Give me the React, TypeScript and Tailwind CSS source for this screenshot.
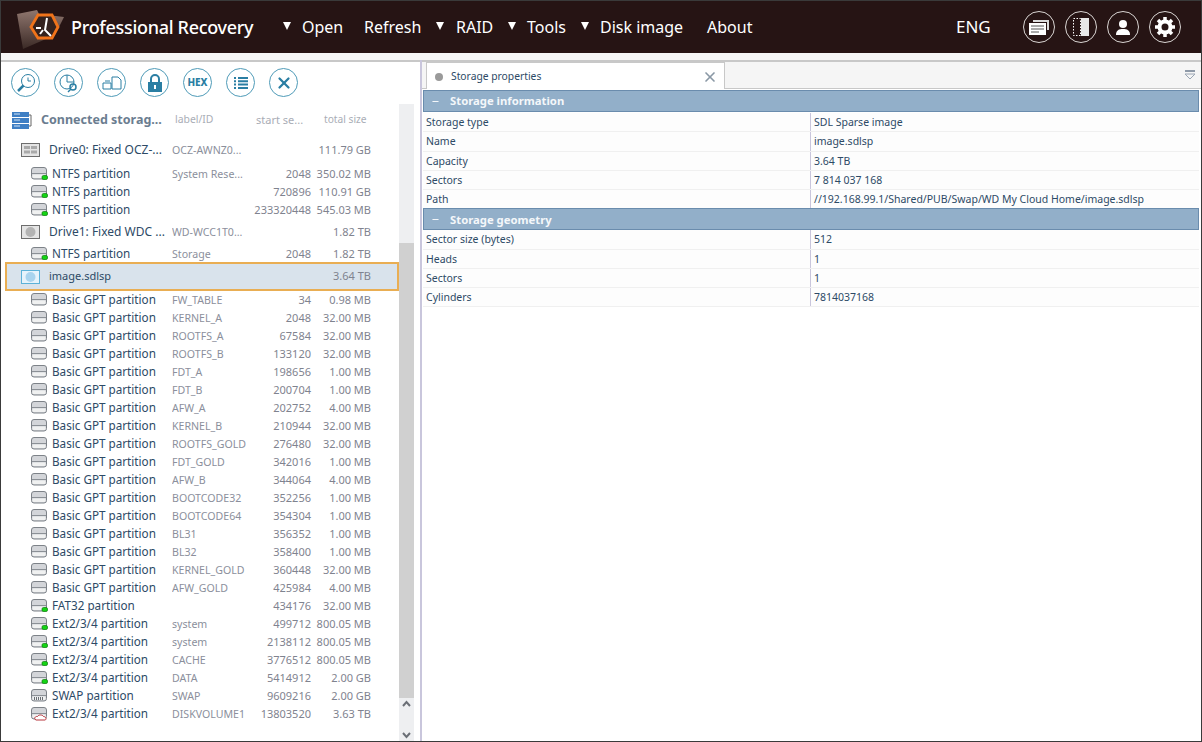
import { Minus, X } from 'lucide-react';

const uiFont = "font-['Noto_Sans',Tahoma,sans-serif]";

type Part = {
  name: string;
  label?: string;
  start?: string;
  size: string;
  kind?: 'ok' | 'plain' | 'swap' | 'bad';
};

const ntfsRows: Part[] = [
  { name: 'NTFS partition', label: 'System Rese...', start: '2048', size: '350.02 MB', kind: 'ok' },
  { name: 'NTFS partition', start: '720896', size: '110.91 GB', kind: 'ok' },
  { name: 'NTFS partition', start: '233320448', size: '545.03 MB', kind: 'ok' },
];

const gptRows: Part[] = [
  { name: 'Basic GPT partition', label: 'FW_TABLE', start: '34', size: '0.98 MB' },
  { name: 'Basic GPT partition', label: 'KERNEL_A', start: '2048', size: '32.00 MB' },
  { name: 'Basic GPT partition', label: 'ROOTFS_A', start: '67584', size: '32.00 MB' },
  { name: 'Basic GPT partition', label: 'ROOTFS_B', start: '133120', size: '32.00 MB' },
  { name: 'Basic GPT partition', label: 'FDT_A', start: '198656', size: '1.00 MB' },
  { name: 'Basic GPT partition', label: 'FDT_B', start: '200704', size: '1.00 MB' },
  { name: 'Basic GPT partition', label: 'AFW_A', start: '202752', size: '4.00 MB' },
  { name: 'Basic GPT partition', label: 'KERNEL_B', start: '210944', size: '32.00 MB' },
  { name: 'Basic GPT partition', label: 'ROOTFS_GOLD', start: '276480', size: '32.00 MB' },
  { name: 'Basic GPT partition', label: 'FDT_GOLD', start: '342016', size: '1.00 MB' },
  { name: 'Basic GPT partition', label: 'AFW_B', start: '344064', size: '4.00 MB' },
  { name: 'Basic GPT partition', label: 'BOOTCODE32', start: '352256', size: '1.00 MB' },
  { name: 'Basic GPT partition', label: 'BOOTCODE64', start: '354304', size: '1.00 MB' },
  { name: 'Basic GPT partition', label: 'BL31', start: '356352', size: '1.00 MB' },
  { name: 'Basic GPT partition', label: 'BL32', start: '358400', size: '1.00 MB' },
  { name: 'Basic GPT partition', label: 'KERNEL_GOLD', start: '360448', size: '32.00 MB' },
  { name: 'Basic GPT partition', label: 'AFW_GOLD', start: '425984', size: '4.00 MB' },
  { name: 'FAT32 partition', start: '434176', size: '32.00 MB', kind: 'ok' },
  { name: 'Ext2/3/4 partition', label: 'system', start: '499712', size: '800.05 MB', kind: 'ok' },
  { name: 'Ext2/3/4 partition', label: 'system', start: '2138112', size: '800.05 MB', kind: 'ok' },
  { name: 'Ext2/3/4 partition', label: 'CACHE', start: '3776512', size: '800.05 MB', kind: 'ok' },
  { name: 'Ext2/3/4 partition', label: 'DATA', start: '5414912', size: '2.00 GB', kind: 'ok' },
  { name: 'SWAP partition', label: 'SWAP', start: '9609216', size: '2.00 GB', kind: 'swap' },
  { name: 'Ext2/3/4 partition', label: 'DISKVOLUME1', start: '13803520', size: '3.63 TB', kind: 'bad' },
];

function PartIcon({ kind = 'plain' }: { kind?: Part['kind'] }) {
  return (
    <svg width="17" height="14" viewBox="0 0 17 14" className="shrink-0">
      <rect x="0.5" y="0.500" width="15" height="11.500" rx="2.500" fill="#d3d5d9" stroke="#7d8288" />
      <rect x="1.500" y="7.500" width="13" height="3.500" rx="1" fill="#f0f1f1" />
      <path d="M1 6.500h14" stroke="#8b9096" />
      {kind === 'ok' && <rect x="11" y="8.500" width="5.500" height="4" rx="1.500" fill="#14d414" stroke="#0b7a0b" strokeWidth="0.700" />}
      {kind === 'swap' && <path d="M3.500 8v3M5.500 8v3M7.500 8v3M9.500 8v3M11.500 8v3" stroke="#6a6f75" />}
      {kind === 'bad' && <path d="M5 13c-2.500-1-1-4 1.500-3.500 1-2 5-2 6 0 2.500 0 3.500 3 1.500 3.500z" fill="#fff" stroke="#b8343c" />}
    </svg>
  );
}

function Row({ part }: { part: Part }) {
  return (
    <div className="flex h-[18px] items-center">
      <div className="ml-[30px] w-[21px] shrink-0"><PartIcon kind={part.kind} /></div>
      <div className="w-[120px] shrink-0 text-[11.7px] text-[#2d4a66]">{part.name}</div>
      <div className="w-[80px] shrink-0 truncate text-[10.6px] text-[#8b8f9c]">{part.label}</div>
      <div className="w-[59px] shrink-0 text-right text-[11px] text-[#7f838f]">{part.start}</div>
      <div className="w-[60px] shrink-0 text-right text-[11px] text-[#7f838f]">{part.size}</div>
    </div>
  );
}

function DriveRow({ name, label, size, icon }: { name: string; label: string; size: string; icon: 'grid' | 'disk' }) {
  return (
    <div className="flex h-[22px] items-center">
      <div className="ml-[20px] w-[28px] shrink-0">
        <svg width="19" height="14" viewBox="0 0 19 14">
          <rect x="0.500" y="0.500" width="18" height="13" fill="#e4e4e4" stroke="#6d6d6d" />
          {icon === 'grid' ? (
            <path d="M3 3h6v3H3zM10 3h6v3h-6zM3 7.500h6v3H3zM10 7.500h6v3h-6z" fill="#a9a9a9" />
          ) : (
            <circle cx="9.500" cy="7" r="5" fill="#b3b3b3" />
          )}
        </svg>
      </div>
      <div className="w-[123px] shrink-0 truncate text-[#2d4a66]">{name}</div>
      <div className="w-[80px] shrink-0 truncate text-[10.6px] text-[#8b8f9c]">{label}</div>
      <div className="w-[119px] shrink-0 text-right text-[11px] text-[#7f838f]">{size}</div>
    </div>
  );
}

function ToolButton({ children }: { children: React.ReactNode }) {
  return (
    <div className="flex h-[29px] w-[29px] items-center justify-center rounded-full border border-[#4f9bb8] bg-white text-[#2a7ea3]">
      {children}
    </div>
  );
}

function TopButton({ children }: { children: React.ReactNode }) {
  return (
    <div className="flex h-[32px] w-[32px] items-center justify-center rounded-full border border-[#d9d5d3]">
      {children}
    </div>
  );
}

function MenuArrow({ className }: { className: string }) {
  return (
    <svg width="8" height="8" viewBox="0 0 8 8" className={`-mt-[2px] shrink-0 ${className}`}>
      <path d="M0 0h8L4 8z" fill="#fff" />
    </svg>
  );
}

function PropRow({ name, value }: { name: string; value: string }) {
  return (
    <div className="flex h-[19.25px] items-center border-b border-[#f0f0f0] bg-[#fdfdfd] text-[10.5px] text-[#2d4a66]">
      <div className="w-[387px] shrink-0 pl-[3px]">{name}</div>
      <div className="h-full flex-1 border-l border-[#c9c6dc] pl-[3px] leading-[19px]">{value}</div>
    </div>
  );
}

function SectionHead({ title }: { title: string }) {
  return (
    <div className="flex h-[22px] items-center border border-[#6a8cad] bg-[#92afc9] text-[11.3px] font-bold text-[#f4f7fa]">
      <Minus size={9} strokeWidth={3} className="ml-[7px] mr-[10px]" />
      {title}
    </div>
  );
}

export default function App() {
  return (
    <div className={`flex h-[742px] w-[1202px] flex-col overflow-hidden border border-[#3a3a3a] bg-white text-xs ${uiFont}`}>
      <header className="flex h-[52px] shrink-0 items-center bg-[#261414] text-white">
        <svg width="50" height="46" viewBox="0 0 50 46" className="ml-[15px] mr-[5px] shrink-0">
          <defs>
            <linearGradient id="folderFill" x1="0" y1="0" x2="0" y2="1">
              <stop offset="0" stopColor="#8f766e" />
              <stop offset="1" stopColor="#3b2a26" />
            </linearGradient>
          </defs>
          <path d="M1 10l20-4 2 4 25 3-9 18-32 14z" fill="url(#folderFill)" />
          <path d="M15 23l7-12h14l6 12-6 11H22z" fill="#34221e" stroke="#f0731a" strokeWidth="2.800" />
          <path d="M20 24h5M31 14l-2 12 6 6M27 26l-3 4" stroke="#fff" strokeWidth="2" fill="none" />
        </svg>
        <div className="w-[212px] text-[18px] font-medium tracking-[-0.3px]">Professional Recovery</div>
        <MenuArrow className="mr-[11px]" />
        <div className="w-[62px] shrink-0 pt-[2px] text-[16px]">Open</div>
        <div className="w-[72px] shrink-0 pt-[2px] text-[16px]">Refresh</div>
        <MenuArrow className="mr-[12px]" />
        <div className="w-[52px] shrink-0 pt-[2px] text-[16px]">RAID</div>
        <MenuArrow className="mr-[11px]" />
        <div className="w-[54px] shrink-0 pt-[2px] text-[16px]">Tools</div>
        <MenuArrow className="mr-[11px]" />
        <div className="w-[107px] shrink-0 pt-[2px] text-[16px]">Disk image</div>
        <div className="w-[249px] shrink-0 pt-[2px] text-[16px]">About</div>
        <div className="w-[67px] shrink-0 text-[17px]">ENG</div>
        <div className="flex gap-[10px]">
          <TopButton>
            <svg width="20" height="15" viewBox="0 0 20 15">
              <path d="M4 0h16v10h-2V2H4z" fill="#ddd" />
              <rect x="0" y="3" width="17" height="12" fill="#fff" />
              <path d="M2 6h13M2 9h13M2 12h8" stroke="#555" />
            </svg>
          </TopButton>
          <TopButton>
            <svg width="16" height="18" viewBox="0 0 16 18">
              <rect x="0.500" y="0.500" width="7" height="17" fill="none" stroke="#fff" strokeDasharray="1.500 1.500" />
              <rect x="8" y="0" width="8" height="18" fill="#e8e8e8" />
            </svg>
          </TopButton>
          <TopButton>
            <svg width="14" height="15" viewBox="0 0 14 15">
              <circle cx="7" cy="4" r="4" fill="#fff" />
              <path d="M0 15c0-5 3-6 7-6s7 1 7 6z" fill="#fff" />
            </svg>
          </TopButton>
          <TopButton>
            <svg width="20" height="20" viewBox="0 0 20 20">
              <circle cx="10" cy="10" r="5.500" fill="none" stroke="#fff" strokeWidth="4" />
              <path d="M10 0v20M0 10h20M3 3l14 14M17 3L3 17" stroke="#fff" strokeWidth="3.500" strokeDasharray="3.500 13 3.500 0" />
            </svg>
          </TopButton>
        </div>
      </header>

      <div className="flex min-h-0 flex-1 border-t-[7px] border-[#f5f5f5]">
        <div className="flex w-[419px] shrink-0 flex-col border-t-2 border-[#c8c8c8]">
          <div className="flex h-[42px] shrink-0 items-start gap-[14px] pl-[10px] pt-[6px]">
            <ToolButton>
              <svg width="20" height="20" viewBox="0 0 20 20" fill="none" stroke="currentColor">
                <circle cx="12" cy="8" r="6.500" />
                <path d="M12 4.500V8h3" />
                <path d="M7.500 12.500L2 18" strokeWidth="2.500" />
              </svg>
            </ToolButton>
            <ToolButton>
              <svg width="20" height="20" viewBox="0 0 20 20" fill="none" stroke="currentColor">
                <circle cx="8" cy="9" r="7" />
                <path d="M8 2v7h7" />
                <circle cx="14" cy="14" r="3" strokeWidth="1.500" />
                <path d="M12 16l-3 3" strokeWidth="1.500" />
              </svg>
            </ToolButton>
            <ToolButton>
              <svg width="20" height="16" viewBox="0 0 20 16" fill="none" stroke="currentColor">
                <path d="M10 2h6l3 3v9h-9zM1 8h8v6H1zM3 6h5" />
              </svg>
            </ToolButton>
            <ToolButton>
              <svg width="16" height="18" viewBox="0 0 16 18" fill="none">
                <path d="M4 9V5a4 4 0 0 1 8 0v4" stroke="currentColor" strokeWidth="2" />
                <rect x="1" y="8" width="14" height="10" fill="currentColor" />
                <rect x="7" y="11" width="2" height="4" fill="#fff" />
              </svg>
            </ToolButton>
            <ToolButton><span className="text-[10px] font-extrabold">HEX</span></ToolButton>
            <ToolButton>
              <svg width="14" height="12" viewBox="0 0 14 12" fill="currentColor">
                <path d="M0 0h2v2H0zM4 0h10v2H4zM0 3.300h2v2H0zM4 3.300h10v2H4zM0 6.600h2v2H0zM4 6.600h10v2H4zM0 10h2v2H0zM4 10h10v2H4z" />
              </svg>
            </ToolButton>
            <ToolButton><X size={18} strokeWidth={3} /></ToolButton>
          </div>

          <div className="flex min-h-0 flex-1">
            <div className="w-[398px] shrink-0 overflow-hidden">
              <div className="flex h-[32px] items-center">
                <svg width="20" height="17" viewBox="0 0 20 17" className="ml-[11px] mr-[9px] shrink-0">
                  <path d="M0 0h17v5H0zM0 6h17v5H0zM0 12h17v5H0z" fill="#3f7fc4" />
                  <path d="M2 2h6M2 8h6M2 14h6" stroke="#cfe2f5" />
                  <path d="M17 3h2v11h-2" fill="none" stroke="#666" />
                </svg>
                <div className="w-[134px] text-[12.5px] font-bold text-[#6b7d90]">Connected storag...</div>
                <div className="w-[81px] text-[10.4px] text-[#a9adb6]">label/ID</div>
                <div className="w-[68px] text-[11px] text-[#a9adb6]">start se...</div>
                <div className="text-[10.2px] text-[#a9adb6]">total size</div>
              </div>
              <div className="h-[3px]" />
              <DriveRow name="Drive0: Fixed OCZ-..." label="OCZ-AWNZ0..." size="111.79 GB" icon="grid" />
              <div className="h-[4px]" />
              {ntfsRows.map((r) => <Row key={r.size} part={r} />)}
              <div className="h-[2px]" />
              <DriveRow name="Drive1: Fixed WDC ..." label="WD-WCC1T0..." size="1.82 TB" icon="disk" />
              <div className="h-[2px]" />
              <Row part={{ name: 'NTFS partition', label: 'Storage', start: '2048', size: '1.82 TB', kind: 'ok' }} />
              <div className="ml-[4px] mt-[-1px] flex h-[29px] w-[394px] items-center border-2 border-[#e9ae53] bg-[#d9e3ec]">
                <div className="ml-[14px] w-[28px] shrink-0">
                  <svg width="19" height="14" viewBox="0 0 19 14">
                    <rect x="0.500" y="0.500" width="18" height="13" fill="#e6f3fb" stroke="#5cb2d8" />
                    <circle cx="9.500" cy="7" r="5" fill="#a9d4ee" />
                  </svg>
                </div>
                <div className="w-[203px] text-[11px] text-[#2d4a66]">image.sdlsp</div>
                <div className="w-[119px] text-right text-[11px] text-[#7f838f]">3.64 TB</div>
              </div>
              {gptRows.map((r) => <Row key={r.start} part={r} />)}
            </div>
            <div className="flex w-[15px] shrink-0 flex-col bg-[#eeeff1]">
              <div className="h-[139px]" />
              <div className="flex-1 bg-[#d0d0d0]" />
              <div className="flex h-[43px] flex-col items-center justify-between py-[2px] text-[#6b6f76]">
                <svg width="9" height="7" viewBox="0 0 9 7"><path d="M1 6l3.500-4L8 6" fill="none" stroke="currentColor" strokeWidth="2" /></svg>
                <svg width="9" height="7" viewBox="0 0 9 7"><path d="M1 1l3.500 4L8 1" fill="none" stroke="currentColor" strokeWidth="2" /></svg>
              </div>
            </div>
          </div>
        </div>

        <div className="flex min-w-0 flex-1 flex-col border-l-2 border-[#c9c6dc] bg-white">
          <div className="flex h-[29px] shrink-0 items-end justify-between border-b border-t-2 border-[#c8c8c8] bg-[#f5f5f5] pl-[4px]">
            <div className="-mb-[1px] flex h-[27px] w-[299px] items-center border-x border-t border-[#c8c8c8] bg-white pt-[1px] text-[10.3px] text-[#2d4a66]">
              <div className="mx-[8px] h-[8px] w-[8px] rounded-full bg-[#9a9a9a]" />
              <div className="flex-1">Storage properties</div>
              <X size={16} strokeWidth={2.500} className="mr-[6px] text-[#8a98a5]" />
            </div>
            <svg width="12" height="10" viewBox="0 0 12 10" className="mb-[8px] mr-[5px]">
              <path d="M1 1h10" stroke="#8f9aa8" strokeWidth="2" />
              <path d="M1 4h10L6 9z" fill="none" stroke="#9aa5b3" />
            </svg>
          </div>
          <div className="ml-[1px] mr-[2px] mt-[1px]">
            <SectionHead title="Storage information" />
            <div className="pt-[1px]">
              <PropRow name="Storage type" value="SDL Sparse image" />
              <PropRow name="Name" value="image.sdlsp" />
              <PropRow name="Capacity" value="3.64 TB" />
              <PropRow name="Sectors" value="7 814 037 168" />
              <PropRow name="Path" value="//192.168.99.1/Shared/PUB/Swap/WD My Cloud Home/image.sdlsp" />
            </div>
            <div className="-mt-[1px]">
              <SectionHead title="Storage geometry" />
            </div>
            <PropRow name="Sector size (bytes)" value="512" />
            <PropRow name="Heads" value="1" />
            <PropRow name="Sectors" value="1" />
            <PropRow name="Cylinders" value="7814037168" />
          </div>
        </div>
      </div>
    </div>
  );
}
